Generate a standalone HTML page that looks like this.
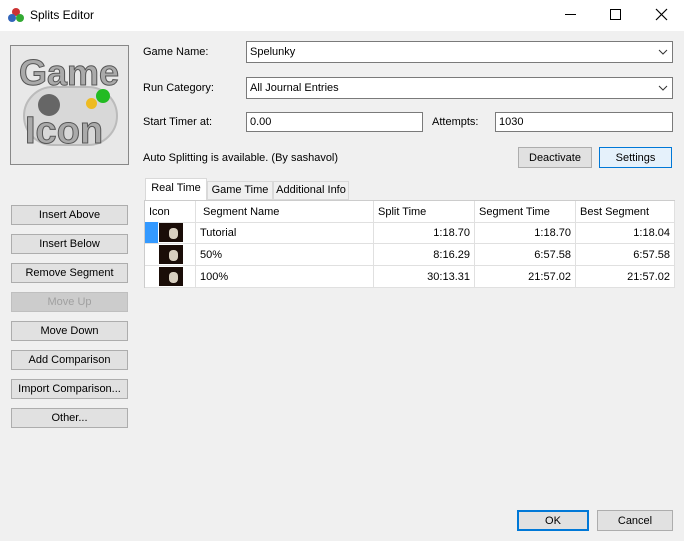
<!DOCTYPE html><html><head><style>
*{box-sizing:border-box;margin:0;padding:0}
body{width:684px;height:541px;background:#f0f0f0;font-family:"Liberation Sans",sans-serif;font-size:11px;color:#000;position:relative;overflow:hidden}
.a{position:absolute}
.tb{left:0;top:0;width:684px;height:31px;background:#fff}
.box{background:#fff;border:1px solid #7a7a7a;padding:0 3px;display:flex;align-items:center}
.btn{background:#e1e1e1;border:1px solid #adadad;display:flex;align-items:center;justify-content:center}
.dis{color:#a0a0a0;background:#cccccc;border-color:#bfbfbf}
.tab{border:1px solid #d9d9d9;background:#f0f0f0;line-height:17px;text-align:center;top:180px;height:19px}
.grid{left:144px;top:200px;width:531px;height:88px;background:#fff;border:1px solid #ccc}
.c{position:absolute;border-right:1px solid #e0e0e0;border-bottom:1px solid #e0e0e0;height:22px;line-height:22px;padding:0 4px;white-space:nowrap}
.r{text-align:right}
.ic{position:absolute;left:14px;top:1px;width:24px;height:19px;background:#1a0d08}
.ic:after{content:"";position:absolute;left:10px;top:5px;width:9px;height:11px;background:#d8cfc0;border-radius:4px}
</style></head><body>
<div class="a tb"></div>
<svg class="a" style="left:8px;top:7px" width="16" height="16"><circle cx="8" cy="5" r="4" fill="#c33"/><circle cx="4" cy="11" r="4" fill="#36b"/><circle cx="12" cy="11" r="4" fill="#3a3"/></svg>
<div class="a" style="left:30px;top:8px;font-size:12px">Splits Editor</div>
<div class="a" style="left:565px;top:14px;width:11px;height:1px;background:#000"></div>
<div class="a" style="left:610px;top:9px;width:11px;height:11px;border:1px solid #000"></div>
<svg class="a" style="left:655px;top:8px" width="13" height="13"><path d="M1 1L12 12M12 1L1 12" stroke="#000" stroke-width="1.2"/></svg>

<div class="a" style="left:10px;top:45px;width:119px;height:120px;border:1px solid #888;background:#e8e8e8;overflow:hidden">
<div class="a" style="left:12px;top:40px;width:95px;height:60px;background:#d8d8d8;border-radius:30px;border:2px solid #bbb"></div>
<div class="a" style="left:27px;top:48px;width:22px;height:22px;border-radius:50%;background:#666"></div>
<div class="a" style="left:85px;top:43px;width:14px;height:14px;border-radius:50%;background:#2b2"></div>
<div class="a" style="left:75px;top:52px;width:11px;height:11px;border-radius:50%;background:#eb2"></div>
<div class="a" style="left:8px;top:6px;font-size:36px;font-weight:bold;color:#aaa;-webkit-text-stroke:1px #555">Game</div>
<div class="a" style="left:14px;top:64px;font-size:38px;font-weight:bold;color:#aaa;-webkit-text-stroke:1px #555">Icon</div>
</div>

<div class="a" style="left:143px;top:46px">Game Name:</div>
<div class="a box" style="left:246px;top:41px;width:427px;height:22px">Spelunky</div>
<div class="a" style="left:143px;top:82px">Run Category:</div>
<div class="a box" style="left:246px;top:77px;width:427px;height:22px">All Journal Entries</div>
<svg class="a" style="left:658px;top:49px" width="10" height="6"><path d="M1 1L5 5L9 1" stroke="#333" fill="none"/></svg>
<svg class="a" style="left:658px;top:85px" width="10" height="6"><path d="M1 1L5 5L9 1" stroke="#333" fill="none"/></svg>
<div class="a" style="left:143px;top:116px">Start Timer at:</div>
<div class="a box" style="left:246px;top:112px;width:177px;height:20px">0.00</div>
<div class="a" style="left:432px;top:116px">Attempts:</div>
<div class="a box" style="left:495px;top:112px;width:178px;height:20px">1030</div>
<div class="a" style="left:143px;top:152px">Auto Splitting is available. (By sashavol)</div>
<div class="a btn" style="left:518px;top:147px;width:74px;height:21px">Deactivate</div>
<div class="a btn" style="left:599px;top:147px;width:73px;height:21px;border:1px solid #0078d7;background:#e5f1fb">Settings</div>

<div class="a tab" style="left:207px;width:66px;top:181px">Game Time</div>
<div class="a tab" style="left:273px;width:76px;top:181px">Additional Info</div>
<div class="a tab" style="left:145px;width:62px;top:178px;height:22px;background:#fff;border-bottom:none;line-height:19px">Real Time</div>

<div class="a grid">
<div class="c" style="left:0;top:0;width:51px">Icon</div>
<div class="c" style="left:51px;top:0;width:178px;padding-left:7px">Segment Name</div>
<div class="c" style="left:229px;top:0;width:101px">Split Time</div>
<div class="c" style="left:330px;top:0;width:101px">Segment Time</div>
<div class="c" style="left:431px;top:0;width:99px">Best Segment</div>

<div class="c" style="left:0;top:21px;width:51px"><div class="a" style="left:0;top:0;width:13px;height:21px;background:#3399ff"></div><div class="ic"></div></div>
<div class="c" style="left:51px;top:21px;width:178px">Tutorial</div>
<div class="c r" style="left:229px;top:21px;width:101px">1:18.70</div>
<div class="c r" style="left:330px;top:21px;width:101px">1:18.70</div>
<div class="c r" style="left:431px;top:21px;width:99px">1:18.04</div>

<div class="c" style="left:0;top:43px;width:51px"><div class="ic"></div></div>
<div class="c" style="left:51px;top:43px;width:178px">50%</div>
<div class="c r" style="left:229px;top:43px;width:101px">8:16.29</div>
<div class="c r" style="left:330px;top:43px;width:101px">6:57.58</div>
<div class="c r" style="left:431px;top:43px;width:99px">6:57.58</div>

<div class="c" style="left:0;top:65px;width:51px"><div class="ic"></div></div>
<div class="c" style="left:51px;top:65px;width:178px">100%</div>
<div class="c r" style="left:229px;top:65px;width:101px">30:13.31</div>
<div class="c r" style="left:330px;top:65px;width:101px">21:57.02</div>
<div class="c r" style="left:431px;top:65px;width:99px">21:57.02</div>
</div>

<div class="a btn" style="left:11px;top:205px;width:117px;height:20px">Insert Above</div>
<div class="a btn" style="left:11px;top:234px;width:117px;height:20px">Insert Below</div>
<div class="a btn" style="left:11px;top:263px;width:117px;height:20px">Remove Segment</div>
<div class="a btn dis" style="left:11px;top:292px;width:117px;height:20px">Move Up</div>
<div class="a btn" style="left:11px;top:321px;width:117px;height:20px">Move Down</div>
<div class="a btn" style="left:11px;top:350px;width:117px;height:20px">Add Comparison</div>
<div class="a btn" style="left:11px;top:379px;width:117px;height:20px">Import Comparison...</div>
<div class="a btn" style="left:11px;top:408px;width:117px;height:20px">Other...</div>

<div class="a btn" style="left:517px;top:510px;width:72px;height:21px;border:2px solid #0078d7">OK</div>
<div class="a btn" style="left:597px;top:510px;width:76px;height:21px">Cancel</div>
</body></html>
